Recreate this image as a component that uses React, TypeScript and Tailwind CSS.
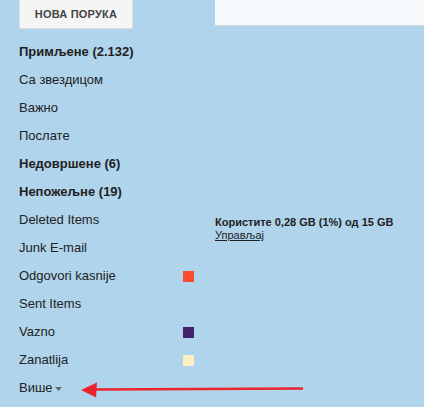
import React from "react";

type Folder = { label: string; bold?: boolean; color?: string };

const folders: Folder[] = [
  { label: "Примљене (2.132)", bold: true },
  { label: "Са звездицом" },
  { label: "Важно" },
  { label: "Послате" },
  { label: "Недовршене (6)", bold: true },
  { label: "Непожељне (19)", bold: true },
  { label: "Deleted Items" },
  { label: "Junk E-mail" },
  { label: "Odgovori kasnije", color: "#fb4c2f" },
  { label: "Sent Items" },
  { label: "Vazno", color: "#41236d" },
  { label: "Zanatlija", color: "#fdedc1" },
];

const App = () => {
  return (
    <div
      className="relative flex w-[424px] h-[407px] overflow-hidden bg-[#b0d4ec] text-[#222]"
      style={{ fontFamily: '"Liberation Sans", Arial, sans-serif' }}
    >
      {/* left nav */}
      <div className="w-[215px] shrink-0 pl-[19px]">
        <button className="w-[114px] h-[29px] bg-[#f5f5f5] border border-t-0 border-[#dcdcdc] text-[11px] font-bold text-[#444] tracking-[0.2px]">
          НОВА ПОРУКА
        </button>

        <ul className="mt-[9px] w-[175px]">
          {folders.map((f) => (
            <li
              key={f.label}
              className={`flex items-center justify-between h-7 text-[13px] ${f.bold ? "font-bold" : ""}`}
            >
              <span>{f.label}</span>
              {f.color && (
                <span className="w-[11px] h-[11px]" style={{ backgroundColor: f.color }} />
              )}
            </li>
          ))}
          <li className="flex items-center h-7 text-[13px]">
            <span>Више</span>
            <svg width="7" height="4" viewBox="0 0 7 4" className="ml-[2px] mt-[1px]">
              <polygon points="0,0 7,0 3.5,4" fill="#666" />
            </svg>
          </li>
        </ul>
      </div>

      {/* right side */}
      <div className="flex-1">
        <div className="h-[26px] bg-[#f5f9fc] border-b border-[#d3dbe1]" />
        <div className="mt-[190px] text-[11px] leading-[13px]">
          <div className="font-bold">Користите 0,28 GB (1%) од 15 GB</div>
          <a className="underline">Управљај</a>
        </div>
      </div>

      {/* red annotation arrow */}
      <svg
        className="absolute left-0 top-0 pointer-events-none"
        width="424"
        height="407"
        viewBox="0 0 424 407"
      >
        <line x1="94" y1="389.5" x2="303" y2="388.5" stroke="#ea2530" strokeWidth="2.5" />
        <polygon points="81,390 97,382.5 96,397.5" fill="#ea2530" />
      </svg>
    </div>
  );
};

export default App;
